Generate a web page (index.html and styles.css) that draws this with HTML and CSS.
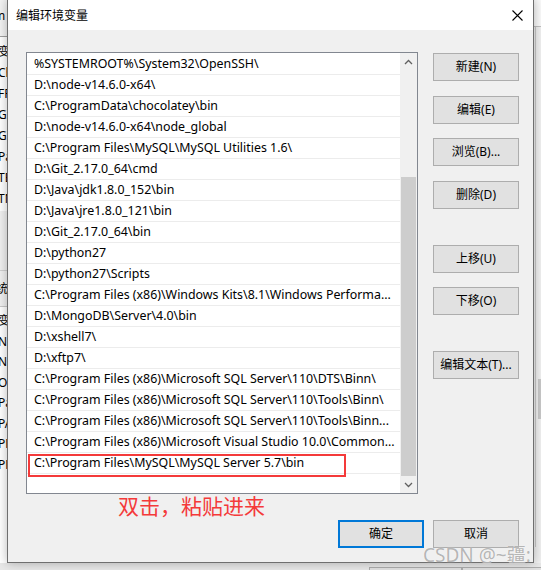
FILE: index.html
```html
<!DOCTYPE html>
<html lang="zh-CN">
<head>
<meta charset="utf-8">
<title>编辑环境变量</title>
<link rel="stylesheet" href="styles.css">
</head>
<body>
<div class="desk">
  <div class="bg-left">
    <div class="bg-top">m</div>
    <div class="bg-rows">
      <div class="bg-row">变</div>
      <div class="bg-row">Ch</div>
      <div class="bg-row">FR</div>
      <div class="bg-row">GI</div>
      <div class="bg-row">GI</div>
      <div class="bg-row">Pa</div>
      <div class="bg-row">TE</div>
      <div class="bg-row">TN</div>
    </div>
    <div class="bg-band"></div>
    <div class="bg-head">统</div>
    <div class="bg-rows bg-rows2">
      <div class="bg-row">变</div>
      <div class="bg-row">N</div>
      <div class="bg-row">N</div>
      <div class="bg-row">O</div>
      <div class="bg-row">Pa</div>
      <div class="bg-row">PA</div>
      <div class="bg-row">PF</div>
      <div class="bg-row">PF</div>
    </div>
  </div>
  <div class="bg-right">
    <div class="bg-right-top"></div>
    <div class="bg-right-body">
      <div class="bg-right-thumb"></div>
    </div>
  </div>
  <div class="bg-bottom">
    <div class="bg-btn bg-btn1"></div>
    <div class="bg-btn bg-btn2"></div>
  </div>
</div>

<div class="dialog">
  <div class="titlebar">
    <span class="title">编辑环境变量</span>
    <svg class="close" width="11" height="11" viewBox="0 0 11 11"><path d="M0.5 0.5 L10.5 10.5 M10.5 0.5 L0.5 10.5" stroke="#000" stroke-width="1.1" fill="none"/></svg>
  </div>
  <div class="content">
    <div class="main">
      <div class="listbox">
        <ul class="rows">
          <li>%SYSTEMROOT%\System32\OpenSSH\</li>
          <li>D:\node-v14.6.0-x64\</li>
          <li>C:\ProgramData\chocolatey\bin</li>
          <li>D:\node-v14.6.0-x64\node_global</li>
          <li>C:\Program Files\MySQL\MySQL Utilities 1.6\</li>
          <li>D:\Git_2.17.0_64\cmd</li>
          <li>D:\Java\jdk1.8.0_152\bin</li>
          <li>D:\Java\jre1.8.0_121\bin</li>
          <li>D:\Git_2.17.0_64\bin</li>
          <li>D:\python27</li>
          <li>D:\python27\Scripts</li>
          <li>C:\Program Files (x86)\Windows Kits\8.1\Windows Performa...</li>
          <li>D:\MongoDB\Server\4.0\bin</li>
          <li>D:\xshell7\</li>
          <li>D:\xftp7\</li>
          <li>C:\Program Files (x86)\Microsoft SQL Server\110\DTS\Binn\</li>
          <li>C:\Program Files (x86)\Microsoft SQL Server\110\Tools\Binn\</li>
          <li>C:\Program Files (x86)\Microsoft SQL Server\110\Tools\Binn...</li>
          <li>C:\Program Files (x86)\Microsoft Visual Studio 10.0\Common...</li>
          <li>C:\Program Files\MySQL\MySQL Server 5.7\bin</li>
        </ul>
        <div class="scrollbar">
          <div class="sb-btn">
            <svg width="9" height="6" viewBox="0 0 9 6"><path d="M1 5 L4.5 1.5 L8 5" stroke="#606060" stroke-width="1.3" fill="none"/></svg>
          </div>
          <div class="sb-track"><div class="sb-thumb"></div></div>
          <div class="sb-btn">
            <svg width="9" height="6" viewBox="0 0 9 6"><path d="M1 1 L4.5 4.5 L8 1" stroke="#606060" stroke-width="1.3" fill="none"/></svg>
          </div>
        </div>
      </div>
      <div class="side">
        <button class="btn b-new">新建(N)</button>
        <button class="btn b-edit">编辑(E)</button>
        <button class="btn b-browse">浏览(B)...</button>
        <button class="btn b-del">删除(D)</button>
        <button class="btn b-up">上移(U)</button>
        <button class="btn b-down">下移(O)</button>
        <button class="btn b-text">编辑文本(T)...</button>
      </div>
    </div>
    <div class="footer">
      <button class="btn btn-default">确定</button>
      <button class="btn">取消</button>
    </div>
  </div>
  <div class="annot-box"></div>
  <div class="annot-text">双击，粘贴进来</div>
</div>
<div class="watermark">CSDN @~疆:</div>
</body>
</html>
```

FILE: styles.css
```css
* { box-sizing: border-box; }
html, body { margin: 0; padding: 0; }
body {
  width: 541px;
  height: 570px;
  position: relative;
  overflow: hidden;
  background: #ffffff;
  font-family: "Noto Sans", "Noto Sans CJK SC", sans-serif;
  font-size: 12px;
  color: #000;
}

/* ---------- background window ---------- */
.desk { position: absolute; inset: 0; }
.bg-left {
  position: absolute; left: 0; top: 0; width: 8px; height: 570px;
  overflow: hidden; background: #fff;
}
.bg-top {
  height: 37px; background: #f3f3f3; border-bottom: 1px solid #a0a0a0;
  padding: 8px 0 0 0; margin-left: -6px; line-height: 16px; color: #000;
}
.bg-rows { padding-top: 4px; }
.bg-row {
  height: 21px; line-height: 21px; margin-left: -2px;
  white-space: nowrap; color: #000; font-size: 12px;
}
.bg-rows2 .bg-row { height: 20.5px; line-height: 20px; }
.bg-band { height: 60px; background: #f0f0f0; margin-top: 2px; border-bottom: 1px solid #d0d0d0; }
.bg-head {
  height: 36px; line-height: 36px; background: #f0f0f0; margin-left: -4px;
  border-bottom: 1px solid #c8c8c8;
}
.bg-right {
  position: absolute; left: 533px; top: 0; width: 8px; height: 570px;
  background: #f0f0f0;
}
.bg-right-top { height: 27px; border-bottom: 1px solid #c0c0c0; background: #fafafa; }
.bg-right-body {
  height: 520px; border-left: 1px solid #c8c8c8; margin-left: 2px;
  display: flex; flex-direction: column; padding-top: 352px;
}
.bg-right-thumb { height: 40px; width: 5px; margin-left: 2px; background: #c8c8c8; }
.bg-bottom {
  position: absolute; left: 0; top: 563px; width: 541px; height: 7px;
  background: #e8e8e8;
}
.bg-btn {
  position: absolute; top: 4px; height: 10px; border: 1px solid #adadad; background: #e1e1e1;
}
.bg-btn1 { left: 369px; width: 93px; }
.bg-btn2 { left: 462px; width: 80px; }

/* ---------- dialog ---------- */
.dialog {
  position: absolute; left: 7px; top: -1px;
  width: 527px; height: 564px;
  border: 1px solid #6f6f6f;
  background: #f0f0f0;
  box-shadow: 0 0 10px rgba(0,0,0,0.28);
  display: flex; flex-direction: column;
}
.titlebar {
  height: 31px; background: #fff;
  display: flex; align-items: center; justify-content: space-between;
  padding: 0 10px 0 8px;
}
.title { font-size: 12px; line-height: 16px; margin-top: 1px; }
.close { display: block; margin-top: 0; }

.content {
  flex: 1;
  padding: 22px 14px 14px 18px;
  display: flex; flex-direction: column;
}
.main { display: flex; gap: 15px; align-items: flex-start; }

.listbox {
  width: 392px; height: 442px;
  border: 1px solid #828790;
  background: #fff;
  display: flex;
}
.rows {
  list-style: none; margin: 0; padding: 1px 0 0 0;
  flex: 1; min-width: 0;
}
.rows li {
  height: 21px;
  line-height: 20px;
  padding-left: 7px;
  border-bottom: 1px solid #ececec;
  white-space: nowrap; overflow: hidden;
  font-size: 12.4px;
}
.scrollbar {
  width: 17px; background: #f0f0f0;
  display: flex; flex-direction: column;
}
.sb-btn {
  height: 17px; display: flex; align-items: center; justify-content: center;
}
.sb-track { flex: 1; display: flex; flex-direction: column; justify-content: flex-end; }
.sb-thumb { height: 299px; margin: 0 1px; background: #cdcdcd; }

.side { width: 86px; display: flex; flex-direction: column; }
.btn {
  width: 86px; height: 28px;
  border: 1px solid #adadad;
  background: #e1e1e1;
  font-family: "Noto Sans", "Noto Sans CJK SC", sans-serif;
  font-size: 12px; color: #000;
  padding: 0; line-height: 16px;
  display: flex; align-items: center; justify-content: center;
}
.b-new { margin-top: 1px; }
.b-edit { margin-top: 15px; }
.b-browse { margin-top: 14px; }
.b-del { margin-top: 15px; }
.b-up { margin-top: 36px; }
.b-down { margin-top: 14px; }
.b-text { margin-top: 36px; }

.footer {
  margin-top: 26px;
  display: flex; justify-content: flex-end; gap: 9px;
}
.btn-default { border: 2px solid #0078d7; }

/* ---------- annotations (drawn over the screenshot) ---------- */
.annot-box {
  position: absolute; left: 20px; top: 454px;
  width: 318px; height: 23px;
  border: 2px solid #f43a3a;
}
.annot-text {
  position: absolute; left: 110px; top: 494px;
  font-family: "Noto Sans CJK SC", sans-serif;
  font-size: 21px; line-height: 22px;
  color: #f43a3a;
}
.watermark {
  position: absolute; left: 423px; top: 544px;
  font-family: "Noto Sans", "Noto Sans CJK SC", sans-serif;
  font-size: 19px; line-height: 22px;
  color: rgba(150,150,150,0.7);
  text-shadow: 0 0 1px #fff;
  white-space: nowrap;
}
```
